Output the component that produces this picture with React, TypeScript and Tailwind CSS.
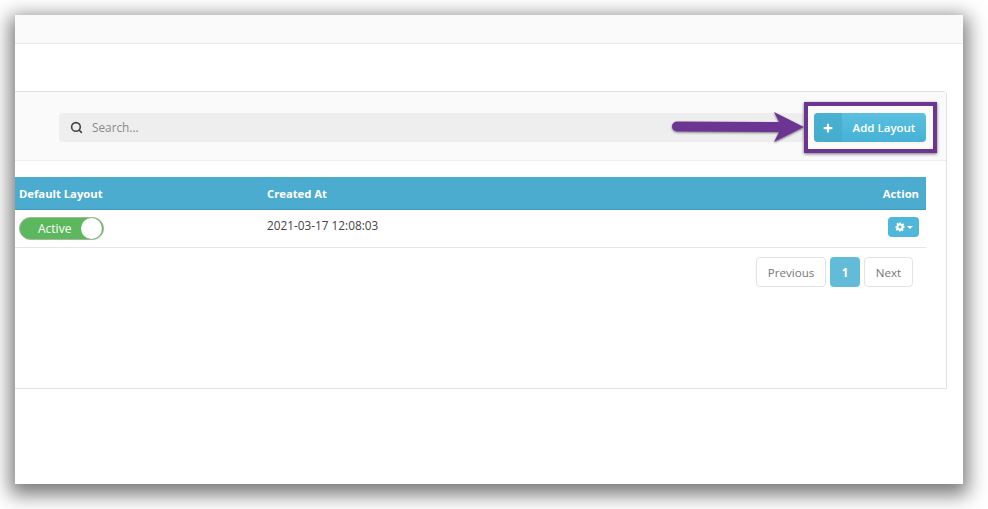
import { Search, Plus } from "lucide-react";

function GearIcon() {
  return (
    <svg width="10" height="10" viewBox="0 0 24 24" fill="white">
      <path d="M10 1h4l.7 3.2 1.9.8 2.8-1.8 2.8 2.8-1.8 2.8.8 1.9L23 10v4l-3.2.7-.8 1.9 1.8 2.8-2.8 2.8-2.8-1.8-1.9.8L14 23h-4l-.7-3.2-1.9-.8-2.8 1.8-2.8-2.8 1.8-2.8-.8-1.9L1 14v-4l3.2-.7.8-1.9-1.8-2.8 2.8-2.8 2.8 1.8 1.9-.8zM12 8.500a3.500 3.500 0 1 0 0 7 3.500 3.500 0 0 0 0-7z" fillRule="evenodd" />
    </svg>
  );
}

function Arrow() {
  return (
    <svg className="absolute left-[670px] top-[109px]" width="136" height="40" viewBox="0 0 136 40">
      <defs>
        <filter id="arrowShadow" x="-10%" y="-30%" width="120%" height="170%">
          <feDropShadow dx="0" dy="1" stdDeviation="1.300" floodColor="#000" floodOpacity="0.5" />
        </filter>
      </defs>
      <path
        d="M7 12.500 L109 13 L104 3 L134 18 L104 33 L109 23 L7 22.500 A5 5 0 0 1 7 12.500 Z"
        fill="#6d3592"
        filter="url(#arrowShadow)"
      />
    </svg>
  );
}

export default function App() {
  return (
    <div className="relative h-[509px] w-[988px] overflow-hidden bg-white pl-[15px] pr-[25px] pt-[15px] font-['Open_Sans',sans-serif] text-[12px] text-[#555]">
      <div className="h-[469px] bg-white shadow-[0_6px_18px_5px_rgba(0,0,0,0.52)]">
        <div className="h-[29px] border-b border-[#e9e9e9] bg-[#fafafa]" />
        <div className="mr-[16px] mt-[47px] h-[298px] rounded-tr-sm border-y border-r border-[#e2e2e2]">
          <div className="flex h-[69px] items-start gap-[10px] border-b border-[#ececec] bg-[#fafafa] pl-[44px] pr-[20px] pt-[21px]">
            <div className="flex h-[29px] flex-1 items-center rounded-sm bg-[#eeeeee] pl-[11px]">
              <Search size={13} strokeWidth={3} className="text-[#444]" />
              <span className="ml-[9px] pt-px text-[11.800px] text-[#8a8a8a]">Search...</span>
            </div>
            <div className="flex h-[29px] w-[112px] overflow-hidden rounded-sm bg-gradient-to-b from-[#5bbfe0] to-[#45b2d6] text-white">
              <span className="flex w-[28px] items-center justify-center bg-[#44a9cb]/70">
                <Plus size={12} strokeWidth={4.500} />
              </span>
              <span className="flex flex-1 items-center justify-center text-[11.500px] font-semibold">Add Layout</span>
            </div>
          </div>

          <div className="mr-[20px] mt-[16px]">
            <div className="grid h-[33px] grid-cols-[248px_1fr_auto] items-center border-b border-[#3f9dbf] bg-[#4bacd0] pl-[4px] pr-[7px] pt-[2px] text-[11.250px] font-bold text-white">
              <span>Default Layout</span>
              <span>Created At</span>
              <span>Action</span>
            </div>
            <div className="grid h-[38px] grid-cols-[248px_1fr_auto] border-b border-[#e5e5e5] pl-[4px] pr-[7px]">
              <div className="pt-[7px]">
                <div className="flex h-[23px] w-[85px] items-center justify-between rounded-full border border-[#a9b5a0] bg-[#5cb85c] pl-[18px] pr-px text-white">
                  <span className="pt-px text-[12px]">Active</span>
                  <span className="size-[21px] rounded-full bg-white" />
                </div>
              </div>
              <div className="pt-[7px] text-[11.800px] text-[#444]">2021-03-17 12:08:03</div>
              <div className="pt-[7px]">
                <div className="flex h-[20px] w-[31px] items-center justify-center gap-[2px] rounded-sm bg-[#4fb7da]">
                  <GearIcon />
                  <span className="border-x-[3px] border-t-[3px] border-x-transparent border-t-white" />
                </div>
              </div>
            </div>
            <div className="mt-[9px] flex justify-end gap-[4px] pr-[13px] text-[11.600px]">
              <span className="flex h-[30px] w-[70px] items-center justify-center rounded-sm border border-[#e3e3e3] pt-px text-[#777]">Previous</span>
              <span className="flex h-[30px] w-[30px] items-center justify-center rounded-sm bg-[#62bcd8] pt-px font-bold text-white">1</span>
              <span className="flex h-[30px] w-[49px] items-center justify-center rounded-sm border border-[#e3e3e3] pt-px text-[#777]">Next</span>
            </div>
          </div>
        </div>
      </div>

      <div className="absolute left-[804px] top-[102px] h-[51px] w-[133px] border-[4px] border-[#6d3592] shadow-[0_1px_3px_rgba(0,0,0,0.55)]" />
      <Arrow />
    </div>
  );
}
